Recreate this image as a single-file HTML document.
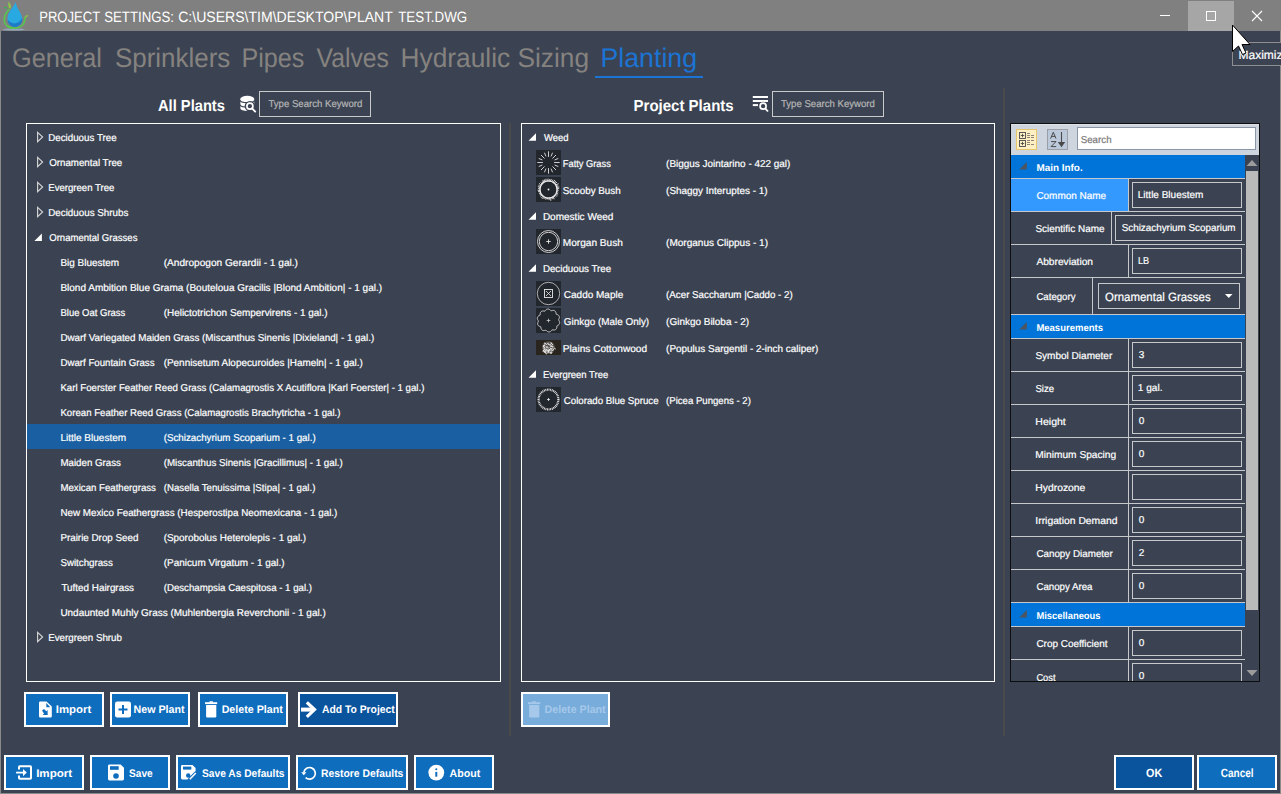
<!DOCTYPE html>
<html><head><meta charset="utf-8"><title>Project Settings</title>
<style>html,body{margin:0;padding:0;background:#3b4352;overflow:hidden}svg{display:block}</style></head>
<body><svg width="1281" height="794" viewBox="0 0 1281 794" style="font-family:'Liberation Sans',sans-serif"><rect x="0" y="0" width="1281" height="794" fill="#3b4352" /><rect x="0" y="0" width="1281" height="31" fill="#808080" /><rect x="0" y="31" width="1" height="763" fill="#8a8a8a" /><rect x="1280" y="31" width="1" height="763" fill="#8a8a8a" /><rect x="0" y="793" width="1281" height="1" fill="#8a8a8a" /><rect x="1188" y="1" width="46" height="30" fill="#a6a6a6" /><rect x="1160" y="15" width="10" height="1" fill="#ffffff" /><rect x="1206" y="11" width="10" height="1" fill="#ffffff" /><rect x="1206" y="20" width="10" height="1" fill="#ffffff" /><rect x="1206" y="11" width="1" height="10" fill="#ffffff" /><rect x="1215" y="11" width="1" height="10" fill="#ffffff" /><path d="M1252 11 L1262 21 M1262 11 L1252 21" stroke="#fff" stroke-width="1.1"/><text text-rendering="geometricPrecision" x="39.23" y="22" font-family="Liberation Sans" font-size="15" font-weight="400" fill="#ffffff" textLength="60.98" lengthAdjust="spacingAndGlyphs" >PROJECT</text><text text-rendering="geometricPrecision" x="104.22" y="22" font-family="Liberation Sans" font-size="15" font-weight="400" fill="#ffffff" textLength="69.83" lengthAdjust="spacingAndGlyphs" >SETTINGS:</text><text text-rendering="geometricPrecision" x="178.16" y="22" font-family="Liberation Sans" font-size="15" font-weight="400" fill="#ffffff" textLength="214.68" lengthAdjust="spacingAndGlyphs" >C:\USERS\TIM\DESKTOP\PLANT</text><text text-rendering="geometricPrecision" x="398.20" y="22" font-family="Liberation Sans" font-size="15" font-weight="400" fill="#ffffff" textLength="68.94" lengthAdjust="spacingAndGlyphs" >TEST.DWG</text><g>
<ellipse cx="13.8" cy="29.5" rx="11" ry="0.9" fill="#98adc6" opacity="0.85"/>
<path d="M9.3 9.3 C6.5 12 4.2 16 4.2 19.4 C4.2 22 5 24 6.5 25.5 C8.5 27.3 11 28.2 14.1 28.2 C17.5 28.2 20.5 27 22.6 25 C24.2 23.2 24.9 20.5 25 17" stroke="#58c450" stroke-width="1.7" fill="none"/>
<path d="M15.7 1.8 C14.8 4.5 12.5 7.5 10.5 10.2 C8.6 13 7.5 15.6 7.5 18.6 C7.5 23.2 10.8 26.9 15 26.9 C19 26.9 22.2 23.6 22.2 19.6 C22.2 16 20.6 12.8 18.4 9.4 C16.9 7 15.9 4.5 15.7 1.8 Z" fill="#29a9e1"/>
<path d="M7.6 19.2 C9 21.6 11.5 23.3 14.2 23.4 C17.5 23.5 20.5 21.2 22.1 18 C22.3 18.5 22.2 19.1 22.2 19.6 C22.2 23.6 19 26.9 15 26.9 C10.8 26.9 7.6 23.5 7.6 19.2 Z" fill="#1e79c6"/>
<path d="M9.2 8.6 C8.2 6.6 8.4 3.6 8.3 1.8 C10 3 11.2 5.2 10.9 8 Z" fill="#8cc941"/>
<path d="M8.2 8.4 C6.8 7.2 5 6.8 3.6 7.3 C4.8 8.4 6.6 8.9 8.2 8.4 Z" fill="#39b54a"/>
<path d="M24.4 17.8 C25 16.2 26.5 15 28.4 15.1 C27.8 16.7 26.3 17.8 24.4 17.8 Z" fill="#8cc941"/>
</g><text text-rendering="geometricPrecision" x="12.06" y="67" font-family="Liberation Sans" font-size="27" font-weight="400" fill="#85827f" textLength="89.93" lengthAdjust="spacingAndGlyphs" >General</text><text text-rendering="geometricPrecision" x="114.94" y="67" font-family="Liberation Sans" font-size="27" font-weight="400" fill="#85827f" textLength="115.37" lengthAdjust="spacingAndGlyphs" >Sprinklers</text><text text-rendering="geometricPrecision" x="241.44" y="67" font-family="Liberation Sans" font-size="27" font-weight="400" fill="#85827f" textLength="62.77" lengthAdjust="spacingAndGlyphs" >Pipes</text><text text-rendering="geometricPrecision" x="316.60" y="67" font-family="Liberation Sans" font-size="27" font-weight="400" fill="#85827f" textLength="72.36" lengthAdjust="spacingAndGlyphs" >Valves</text><text text-rendering="geometricPrecision" x="400.55" y="67" font-family="Liberation Sans" font-size="27" font-weight="400" fill="#85827f" textLength="188.48" lengthAdjust="spacingAndGlyphs" >Hydraulic Sizing</text><text text-rendering="geometricPrecision" x="600.42" y="67" font-family="Liberation Sans" font-size="27" font-weight="400" fill="#1b74d4" textLength="96.75" lengthAdjust="spacingAndGlyphs" >Planting</text><rect x="595" y="76" width="108" height="2" fill="#1b74d4" /><text text-rendering="geometricPrecision" x="158.00" y="111" font-family="Liberation Sans" font-size="16" font-weight="700" fill="#ffffff" textLength="66.91" lengthAdjust="spacingAndGlyphs" >All Plants</text><text text-rendering="geometricPrecision" x="633.56" y="111" font-family="Liberation Sans" font-size="16" font-weight="700" fill="#ffffff" textLength="100.10" lengthAdjust="spacingAndGlyphs" >Project Plants</text><rect x="259" y="91" width="112" height="1" fill="#c9c9c9" /><rect x="259" y="116" width="112" height="1" fill="#c9c9c9" /><rect x="259" y="91" width="1" height="26" fill="#c9c9c9" /><rect x="370" y="91" width="1" height="26" fill="#c9c9c9" /><text text-rendering="geometricPrecision" x="268.50" y="106.8" font-family="Liberation Sans" font-size="10" font-weight="400" fill="#b5b5b5" stroke="#b5b5b5" stroke-width="0.2" textLength="93.79" lengthAdjust="spacingAndGlyphs" >Type Search Keyword</text><rect x="772" y="91" width="112" height="1" fill="#c9c9c9" /><rect x="772" y="116" width="112" height="1" fill="#c9c9c9" /><rect x="772" y="91" width="1" height="26" fill="#c9c9c9" /><rect x="883" y="91" width="1" height="26" fill="#c9c9c9" /><text text-rendering="geometricPrecision" x="781.00" y="106.8" font-family="Liberation Sans" font-size="10" font-weight="400" fill="#b5b5b5" stroke="#b5b5b5" stroke-width="0.2" textLength="93.79" lengthAdjust="spacingAndGlyphs" >Type Search Keyword</text><g>
<path d="M240.4 98.7 V108.6 A6.9 2.4 0 0 0 254.2 108.6 V98.7 Z" fill="#fff"/>
<ellipse cx="247.3" cy="98.7" rx="6.9" ry="2.9" fill="#fff"/>
<path d="M240.2 100.3 A7.1 2.3 0 0 0 254.4 100.3 M240.2 104.7 A7.1 2.3 0 0 0 254.4 104.7" stroke="#3b4352" stroke-width="1.1" fill="none"/>
<circle cx="249.9" cy="106.2" r="5.3" fill="#3b4352"/>
<path d="M252.5 109 L256.2 112.6" stroke="#3b4352" stroke-width="3.4"/>
<circle cx="249.9" cy="106.2" r="3" fill="none" stroke="#fff" stroke-width="1.7"/>
<path d="M252 108.4 L255.2 111.6" stroke="#fff" stroke-width="1.9" stroke-linecap="round"/>
</g><g fill="#fff">
<rect x="752.8" y="96" width="15.2" height="2"/>
<rect x="752.8" y="100" width="15.2" height="2"/>
<rect x="752.8" y="104.1" width="5.2" height="2"/>
<circle cx="763.1" cy="106.2" r="4.4" fill="#3b4352"/><circle cx="763.1" cy="106.2" r="3" fill="none" stroke="#fff" stroke-width="1.7"/>
<path d="M765.2 108.4 L768 111.5" stroke="#fff" stroke-width="1.8"/>
</g><rect x="509" y="123" width="2" height="613" fill="#4a4a4a" /><rect x="1003" y="88" width="2" height="648" fill="#4a4a4a" /><rect x="26" y="123" width="475" height="1" fill="#ffffff" /><rect x="26" y="681" width="475" height="1" fill="#ffffff" /><rect x="26" y="123" width="1" height="559" fill="#ffffff" /><rect x="500" y="123" width="1" height="559" fill="#ffffff" /><rect x="27" y="424" width="473" height="25" fill="#1a5fa1" /><path d="M37.6 132.4 L42.6 137.0 L37.6 141.60000000000002 Z" fill="none" stroke="#d4d4d4" stroke-width="1.15"/><text text-rendering="geometricPrecision" x="48.22" y="141" font-family="Liberation Sans" font-size="10" font-weight="400" fill="#fff" stroke="#fff" stroke-width="0.2" textLength="68.42" lengthAdjust="spacingAndGlyphs" >Deciduous Tree</text><path d="M37.6 157.4 L42.6 162.0 L37.6 166.60000000000002 Z" fill="none" stroke="#d4d4d4" stroke-width="1.15"/><text text-rendering="geometricPrecision" x="49.20" y="166" font-family="Liberation Sans" font-size="10" font-weight="400" fill="#fff" stroke="#fff" stroke-width="0.2" textLength="73.05" lengthAdjust="spacingAndGlyphs" >Ornamental Tree</text><path d="M37.6 182.4 L42.6 187.0 L37.6 191.60000000000002 Z" fill="none" stroke="#d4d4d4" stroke-width="1.15"/><text text-rendering="geometricPrecision" x="48.24" y="191" font-family="Liberation Sans" font-size="10" font-weight="400" fill="#fff" stroke="#fff" stroke-width="0.2" textLength="66.20" lengthAdjust="spacingAndGlyphs" >Evergreen Tree</text><path d="M37.6 207.4 L42.6 212.0 L37.6 216.60000000000002 Z" fill="none" stroke="#d4d4d4" stroke-width="1.15"/><text text-rendering="geometricPrecision" x="48.22" y="216" font-family="Liberation Sans" font-size="10" font-weight="400" fill="#fff" stroke="#fff" stroke-width="0.2" textLength="80.10" lengthAdjust="spacingAndGlyphs" >Deciduous Shrubs</text><path d="M34.4 241.0 L41.9 241.0 L41.9 233.5 Z" fill="#ffffff"/><text text-rendering="geometricPrecision" x="49.20" y="241" font-family="Liberation Sans" font-size="10" font-weight="400" fill="#fff" stroke="#fff" stroke-width="0.2" textLength="88.25" lengthAdjust="spacingAndGlyphs" >Ornamental Grasses</text><text text-rendering="geometricPrecision" x="60.41" y="266" font-family="Liberation Sans" font-size="10" font-weight="400" fill="#fff" stroke="#fff" stroke-width="0.2" textLength="58.61" lengthAdjust="spacingAndGlyphs" >Big Bluestem</text><text text-rendering="geometricPrecision" x="163.70" y="266" font-family="Liberation Sans" font-size="10" font-weight="400" fill="#fff" stroke="#fff" stroke-width="0.2" textLength="134.27" lengthAdjust="spacingAndGlyphs" >(Andropogon Gerardii - 1 gal.)</text><text text-rendering="geometricPrecision" x="60.40" y="291" font-family="Liberation Sans" font-size="10" font-weight="400" fill="#fff" stroke="#fff" stroke-width="0.2" textLength="321.67" lengthAdjust="spacingAndGlyphs" >Blond Ambition Blue Grama (Bouteloua Gracilis |Blond Ambition| - 1 gal.)</text><text text-rendering="geometricPrecision" x="60.45" y="316" font-family="Liberation Sans" font-size="10" font-weight="400" fill="#fff" stroke="#fff" stroke-width="0.2" textLength="64.89" lengthAdjust="spacingAndGlyphs" >Blue Oat Grass</text><text text-rendering="geometricPrecision" x="163.70" y="316" font-family="Liberation Sans" font-size="10" font-weight="400" fill="#fff" stroke="#fff" stroke-width="0.2" textLength="163.86" lengthAdjust="spacingAndGlyphs" >(Helictotrichon Sempervirens - 1 gal.)</text><text text-rendering="geometricPrecision" x="60.42" y="341" font-family="Liberation Sans" font-size="10" font-weight="400" fill="#fff" stroke="#fff" stroke-width="0.2" textLength="313.76" lengthAdjust="spacingAndGlyphs" >Dwarf Variegated Maiden Grass (Miscanthus Sinenis |Dixieland| - 1 gal.)</text><text text-rendering="geometricPrecision" x="60.43" y="366" font-family="Liberation Sans" font-size="10" font-weight="400" fill="#fff" stroke="#fff" stroke-width="0.2" textLength="94.12" lengthAdjust="spacingAndGlyphs" >Dwarf Fountain Grass</text><text text-rendering="geometricPrecision" x="163.70" y="366" font-family="Liberation Sans" font-size="10" font-weight="400" fill="#fff" stroke="#fff" stroke-width="0.2" textLength="199.15" lengthAdjust="spacingAndGlyphs" >(Pennisetum Alopecuroides |Hameln| - 1 gal.)</text><text text-rendering="geometricPrecision" x="60.43" y="391" font-family="Liberation Sans" font-size="10" font-weight="400" fill="#fff" stroke="#fff" stroke-width="0.2" textLength="363.97" lengthAdjust="spacingAndGlyphs" >Karl Foerster Feather Reed Grass (Calamagrostis X Acutiflora |Karl Foerster| - 1 gal.)</text><text text-rendering="geometricPrecision" x="60.44" y="416" font-family="Liberation Sans" font-size="10" font-weight="400" fill="#fff" stroke="#fff" stroke-width="0.2" textLength="280.03" lengthAdjust="spacingAndGlyphs" >Korean Feather Reed Grass (Calamagrostis Brachytricha - 1 gal.)</text><text text-rendering="geometricPrecision" x="60.40" y="441" font-family="Liberation Sans" font-size="10" font-weight="400" fill="#fff" stroke="#fff" stroke-width="0.2" textLength="65.80" lengthAdjust="spacingAndGlyphs" >Little Bluestem</text><text text-rendering="geometricPrecision" x="163.70" y="441" font-family="Liberation Sans" font-size="10" font-weight="400" fill="#fff" stroke="#fff" stroke-width="0.2" textLength="152.00" lengthAdjust="spacingAndGlyphs" >(Schizachyrium Scoparium - 1 gal.)</text><text text-rendering="geometricPrecision" x="60.43" y="466" font-family="Liberation Sans" font-size="10" font-weight="400" fill="#fff" stroke="#fff" stroke-width="0.2" textLength="60.52" lengthAdjust="spacingAndGlyphs" >Maiden Grass</text><text text-rendering="geometricPrecision" x="163.70" y="466" font-family="Liberation Sans" font-size="10" font-weight="400" fill="#fff" stroke="#fff" stroke-width="0.2" textLength="179.08" lengthAdjust="spacingAndGlyphs" >(Miscanthus Sinenis |Gracillimus| - 1 gal.)</text><text text-rendering="geometricPrecision" x="60.43" y="491" font-family="Liberation Sans" font-size="10" font-weight="400" fill="#fff" stroke="#fff" stroke-width="0.2" textLength="95.50" lengthAdjust="spacingAndGlyphs" >Mexican Feathergrass</text><text text-rendering="geometricPrecision" x="163.70" y="491" font-family="Liberation Sans" font-size="10" font-weight="400" fill="#fff" stroke="#fff" stroke-width="0.2" textLength="151.73" lengthAdjust="spacingAndGlyphs" >(Nasella Tenuissima |Stipa| - 1 gal.)</text><text text-rendering="geometricPrecision" x="60.42" y="516" font-family="Liberation Sans" font-size="10" font-weight="400" fill="#fff" stroke="#fff" stroke-width="0.2" textLength="276.97" lengthAdjust="spacingAndGlyphs" >New Mexico Feathergrass (Hesperostipa Neomexicana - 1 gal.)</text><text text-rendering="geometricPrecision" x="60.42" y="541" font-family="Liberation Sans" font-size="10" font-weight="400" fill="#fff" stroke="#fff" stroke-width="0.2" textLength="78.06" lengthAdjust="spacingAndGlyphs" >Prairie Drop Seed</text><text text-rendering="geometricPrecision" x="163.70" y="541" font-family="Liberation Sans" font-size="10" font-weight="400" fill="#fff" stroke="#fff" stroke-width="0.2" textLength="142.47" lengthAdjust="spacingAndGlyphs" >(Sporobolus Heterolepis - 1 gal.)</text><text text-rendering="geometricPrecision" x="60.43" y="566" font-family="Liberation Sans" font-size="10" font-weight="400" fill="#fff" stroke="#fff" stroke-width="0.2" textLength="52.38" lengthAdjust="spacingAndGlyphs" >Switchgrass</text><text text-rendering="geometricPrecision" x="163.70" y="566" font-family="Liberation Sans" font-size="10" font-weight="400" fill="#fff" stroke="#fff" stroke-width="0.2" textLength="120.83" lengthAdjust="spacingAndGlyphs" >(Panicum Virgatum - 1 gal.)</text><text text-rendering="geometricPrecision" x="61.40" y="591" font-family="Liberation Sans" font-size="10" font-weight="400" fill="#fff" stroke="#fff" stroke-width="0.2" textLength="72.64" lengthAdjust="spacingAndGlyphs" >Tufted Hairgrass</text><text text-rendering="geometricPrecision" x="163.70" y="591" font-family="Liberation Sans" font-size="10" font-weight="400" fill="#fff" stroke="#fff" stroke-width="0.2" textLength="148.29" lengthAdjust="spacingAndGlyphs" >(Deschampsia Caespitosa - 1 gal.)</text><text text-rendering="geometricPrecision" x="60.41" y="616" font-family="Liberation Sans" font-size="10" font-weight="400" fill="#fff" stroke="#fff" stroke-width="0.2" textLength="265.29" lengthAdjust="spacingAndGlyphs" >Undaunted Muhly Grass (Muhlenbergia Reverchonii - 1 gal.)</text><path d="M37.6 632.4 L42.6 637.0 L37.6 641.5999999999999 Z" fill="none" stroke="#d4d4d4" stroke-width="1.15"/><text text-rendering="geometricPrecision" x="48.23" y="641" font-family="Liberation Sans" font-size="10" font-weight="400" fill="#fff" stroke="#fff" stroke-width="0.2" textLength="73.67" lengthAdjust="spacingAndGlyphs" >Evergreen Shrub</text><rect x="521" y="123" width="474" height="1" fill="#ffffff" /><rect x="521" y="681" width="474" height="1" fill="#ffffff" /><rect x="521" y="123" width="1" height="559" fill="#ffffff" /><rect x="994" y="123" width="1" height="559" fill="#ffffff" /><path d="M528.5 140.7 L536.0 140.7 L536.0 133.2 Z" fill="#ffffff"/><text text-rendering="geometricPrecision" x="543.90" y="141" font-family="Liberation Sans" font-size="10" font-weight="400" fill="#fff" stroke="#fff" stroke-width="0.2" textLength="24.56" lengthAdjust="spacingAndGlyphs" >Weed</text><rect x="536" y="150" width="25" height="25" fill="#22262d" /><path d="M554.10 162.50 L559.70 162.50 M554.60 165.03 L558.29 166.56 M552.46 166.46 L556.00 170.00 M551.03 168.60 L552.56 172.29 M548.50 168.10 L548.50 173.70 M545.97 168.60 L544.44 172.29 M544.54 166.46 L541.00 170.00 M542.40 165.03 L538.71 166.56 M542.90 162.50 L537.30 162.50 M542.40 159.97 L538.71 158.44 M544.54 158.54 L541.00 155.00 M545.97 156.40 L544.44 152.71 M548.50 156.90 L548.50 151.30 M551.03 156.40 L552.56 152.71 M552.46 158.54 L556.00 155.00 M554.60 159.97 L558.29 158.44" stroke="#d6d6d6" stroke-width="0.95"/><text text-rendering="geometricPrecision" x="562.87" y="167" font-family="Liberation Sans" font-size="10" font-weight="400" fill="#fff" stroke="#fff" stroke-width="0.2" textLength="47.94" lengthAdjust="spacingAndGlyphs" >Fatty Grass</text><text text-rendering="geometricPrecision" x="666.10" y="167" font-family="Liberation Sans" font-size="10" font-weight="400" fill="#fff" stroke="#fff" stroke-width="0.2" textLength="124.28" lengthAdjust="spacingAndGlyphs" >(Biggus Jointarino - 422 gal)</text><rect x="536" y="177" width="25" height="25" fill="#22262d" /><circle cx="548.5" cy="189.5" r="8.6" stroke="#f0f0f0" stroke-width="1.2" fill="none"/><path d="M556.50 189.63 L558.69 190.48 M556.36 191.01 L558.25 192.19 M556.04 192.18 L558.16 193.83 M555.62 193.15 L557.69 195.19 M554.96 194.21 L556.61 196.47 M554.14 195.18 L555.05 197.25 M553.06 196.07 L554.20 199.29 M552.09 196.65 L552.39 199.10 M550.73 197.18 L550.82 200.78 M549.52 197.43 L549.01 200.12 M548.11 197.49 L547.21 199.49 M546.91 197.34 L545.61 199.56 M545.97 197.09 L544.52 198.88 M544.76 196.57 L542.43 199.04 M543.74 195.93 L541.31 197.74 M542.67 194.97 L540.22 196.11 M541.90 194.02 L539.74 194.53 M541.36 193.11 L538.94 193.41 M540.81 191.71 L538.03 191.62 M540.58 190.63 L537.58 190.17 M540.50 189.32 L538.08 188.43 M540.65 187.94 L537.80 186.46 M540.92 186.94 L538.47 185.18 M541.47 185.68 L538.95 183.28 M542.20 184.56 L540.81 182.41 M543.13 183.57 L542.28 181.43 M543.93 182.93 L542.86 179.81 M544.92 182.34 L544.46 179.50 M546.04 181.89 L545.95 178.73 M547.55 181.56 L548.08 178.59 M548.85 181.51 L549.80 179.08 M550.03 181.65 L551.44 178.95 M551.19 181.97 L552.91 179.72 M552.43 182.53 L554.94 179.96 M553.35 183.14 L555.89 181.27 M554.17 183.86 L556.99 182.31 M555.12 185.01 L558.58 183.78 M555.77 186.16 L558.32 185.91 M556.15 187.18 L559.32 187.14 M556.40 188.26 L559.21 188.69" stroke="#eaeaea" stroke-width="0.9"/><circle cx="548.5" cy="189.5" r="0.9" fill="#fff"/><text text-rendering="geometricPrecision" x="562.82" y="194" font-family="Liberation Sans" font-size="10" font-weight="400" fill="#fff" stroke="#fff" stroke-width="0.2" textLength="57.90" lengthAdjust="spacingAndGlyphs" >Scooby Bush</text><text text-rendering="geometricPrecision" x="666.10" y="194" font-family="Liberation Sans" font-size="10" font-weight="400" fill="#fff" stroke="#fff" stroke-width="0.2" textLength="101.48" lengthAdjust="spacingAndGlyphs" >(Shaggy Interuptes - 1)</text><path d="M528.5 219.7 L536.0 219.7 L536.0 212.2 Z" fill="#ffffff"/><text text-rendering="geometricPrecision" x="542.90" y="220" font-family="Liberation Sans" font-size="10" font-weight="400" fill="#fff" stroke="#fff" stroke-width="0.2" textLength="70.51" lengthAdjust="spacingAndGlyphs" >Domestic Weed</text><rect x="536" y="229" width="25" height="25" fill="#22262d" /><circle cx="548.5" cy="241.5" r="11" stroke="#e0e0e0" stroke-width="0.9" fill="none"/><circle cx="548.5" cy="241.5" r="9.2" stroke="#e0e0e0" stroke-width="0.9" fill="none"/><path d="M546.3 241.5 L550.7 241.5 M548.5 239.3 L548.5 243.7" stroke="#e8e8e8" stroke-width="0.9"/><text text-rendering="geometricPrecision" x="562.79" y="246" font-family="Liberation Sans" font-size="10" font-weight="400" fill="#fff" stroke="#fff" stroke-width="0.2" textLength="60.10" lengthAdjust="spacingAndGlyphs" >Morgan Bush</text><text text-rendering="geometricPrecision" x="666.10" y="246" font-family="Liberation Sans" font-size="10" font-weight="400" fill="#fff" stroke="#fff" stroke-width="0.2" textLength="101.92" lengthAdjust="spacingAndGlyphs" >(Morganus Clippus - 1)</text><path d="M528.5 271.7 L536.0 271.7 L536.0 264.2 Z" fill="#ffffff"/><text text-rendering="geometricPrecision" x="542.93" y="272" font-family="Liberation Sans" font-size="10" font-weight="400" fill="#fff" stroke="#fff" stroke-width="0.2" textLength="68.22" lengthAdjust="spacingAndGlyphs" >Deciduous Tree</text><rect x="536" y="281" width="25" height="25" fill="#22262d" /><circle cx="548.5" cy="293.5" r="11.2" stroke="#d0d0d0" stroke-width="0.8" fill="none"/><rect x="544.5" y="289.5" width="8" height="8" stroke="#e8e8e8" stroke-width="0.9" fill="none"/><path d="M546.0 291.0 L551.0 296.0 M551.0 291.0 L546.0 296.0" stroke="#e8e8e8" stroke-width="0.8"/><text text-rendering="geometricPrecision" x="563.80" y="298" font-family="Liberation Sans" font-size="10" font-weight="400" fill="#fff" stroke="#fff" stroke-width="0.2" textLength="59.48" lengthAdjust="spacingAndGlyphs" >Caddo Maple</text><text text-rendering="geometricPrecision" x="666.10" y="298" font-family="Liberation Sans" font-size="10" font-weight="400" fill="#fff" stroke="#fff" stroke-width="0.2" textLength="126.65" lengthAdjust="spacingAndGlyphs" >(Acer Saccharum |Caddo - 2)</text><rect x="536" y="308" width="25" height="25" fill="#22262d" /><path d="M558.87 320.50 L559.24 321.06 L559.51 321.66 L559.68 322.27 L559.71 322.88 L559.61 323.48 L559.37 324.03 L559.01 324.53 L558.54 324.97 L557.99 325.33 L557.38 325.63 L556.85 325.93 L556.89 326.60 L556.86 327.27 L556.73 327.91 L556.50 328.50 L556.17 329.02 L555.74 329.44 L555.22 329.75 L554.63 329.94 L553.99 330.02 L553.33 329.99 L552.67 329.87 L552.07 329.80 L551.71 330.37 L551.28 330.89 L550.80 331.33 L550.27 331.68 L549.70 331.90 L549.10 331.98 L548.50 331.93 L547.91 331.74 L547.35 331.43 L546.83 331.02 L546.37 330.53 L545.92 330.12 L545.29 330.37 L544.65 330.54 L544.00 330.62 L543.36 330.58 L542.77 330.42 L542.24 330.14 L541.78 329.75 L541.42 329.25 L541.15 328.67 L540.97 328.03 L540.88 327.36 L540.76 326.77 L540.11 326.60 L539.48 326.36 L538.91 326.04 L538.42 325.64 L538.03 325.16 L537.76 324.62 L537.63 324.03 L537.63 323.41 L537.75 322.78 L537.98 322.17 L538.30 321.57 L538.55 321.02 L538.13 320.50 L537.76 319.94 L537.49 319.34 L537.32 318.73 L537.29 318.12 L537.39 317.52 L537.63 316.97 L537.99 316.47 L538.46 316.03 L539.01 315.67 L539.62 315.37 L540.15 315.07 L540.11 314.40 L540.14 313.73 L540.27 313.09 L540.50 312.50 L540.83 311.98 L541.26 311.56 L541.78 311.25 L542.37 311.06 L543.01 310.98 L543.67 311.01 L544.33 311.13 L544.93 311.20 L545.29 310.63 L545.72 310.11 L546.20 309.67 L546.73 309.32 L547.30 309.10 L547.90 309.02 L548.50 309.07 L549.09 309.26 L549.65 309.57 L550.17 309.98 L550.63 310.47 L551.08 310.88 L551.71 310.63 L552.35 310.46 L553.00 310.38 L553.64 310.42 L554.23 310.58 L554.76 310.86 L555.22 311.25 L555.58 311.75 L555.85 312.33 L556.03 312.97 L556.12 313.64 L556.24 314.23 L556.89 314.40 L557.52 314.64 L558.09 314.96 L558.58 315.36 L558.97 315.84 L559.24 316.38 L559.37 316.97 L559.37 317.59 L559.25 318.22 L559.02 318.83 L558.70 319.43 L558.45 319.98 L558.87 320.50" stroke="#d8d8d8" stroke-width="0.9" fill="none"/><path d="M546.7 320.5 L550.3 320.5 M548.5 318.7 L548.5 322.3" stroke="#cfcfcf" stroke-width="0.8"/><text text-rendering="geometricPrecision" x="563.80" y="325" font-family="Liberation Sans" font-size="10" font-weight="400" fill="#fff" stroke="#fff" stroke-width="0.2" textLength="85.34" lengthAdjust="spacingAndGlyphs" >Ginkgo (Male Only)</text><text text-rendering="geometricPrecision" x="666.10" y="325" font-family="Liberation Sans" font-size="10" font-weight="400" fill="#fff" stroke="#fff" stroke-width="0.2" textLength="83.07" lengthAdjust="spacingAndGlyphs" >(Ginkgo Biloba - 2)</text><rect x="536" y="340" width="25" height="15" fill="#2a241f" /><g><circle cx="548.5" cy="347.6" r="6.4" fill="#7d7a76" opacity="0.55"/><path d="M547.41 349.79 l1.47 0.34" stroke="#f2f2f2" stroke-width="0.9"/><path d="M544.79 346.75 l-0.02 0.68" stroke="#f2f2f2" stroke-width="0.9"/><path d="M552.53 348.57 l0.67 0.20" stroke="#f2f2f2" stroke-width="0.9"/><path d="M543.40 350.22 l0.59 0.50" stroke="#f2f2f2" stroke-width="0.9"/><path d="M544.23 343.20 l0.45 1.33" stroke="#f2f2f2" stroke-width="0.9"/><path d="M549.84 347.40 l1.11 1.42" stroke="#f2f2f2" stroke-width="0.9"/><path d="M549.83 349.30 l-0.86 0.56" stroke="#f2f2f2" stroke-width="0.9"/><path d="M550.53 351.96 l0.58 1.38" stroke="#f2f2f2" stroke-width="0.9"/><path d="M546.99 347.13 l0.55 0.41" stroke="#f2f2f2" stroke-width="0.9"/><path d="M546.76 343.87 l-0.28 1.00" stroke="#f2f2f2" stroke-width="0.9"/><path d="M545.20 348.60 l-1.00 1.39" stroke="#f2f2f2" stroke-width="0.9"/><path d="M548.68 352.37 l-1.23 0.51" stroke="#f2f2f2" stroke-width="0.9"/><path d="M548.06 344.25 l1.84 0.71" stroke="#f2f2f2" stroke-width="0.9"/><path d="M543.73 350.30 l0.03 0.81" stroke="#f2f2f2" stroke-width="0.9"/><path d="M553.49 348.86 l-0.38 1.63" stroke="#f2f2f2" stroke-width="0.9"/><path d="M551.00 345.11 l-0.46 1.50" stroke="#f2f2f2" stroke-width="0.9"/><path d="M544.77 345.55 l-1.75 0.31" stroke="#f2f2f2" stroke-width="0.9"/><path d="M543.43 348.43 l-0.41 0.55" stroke="#f2f2f2" stroke-width="0.9"/><path d="M544.72 342.59 l1.10 1.36" stroke="#f2f2f2" stroke-width="0.9"/><path d="M544.62 350.99 l0.08 0.63" stroke="#f2f2f2" stroke-width="0.9"/><path d="M549.56 349.48 l-0.51 0.45" stroke="#f2f2f2" stroke-width="0.9"/><path d="M550.66 349.88 l-1.05 0.45" stroke="#f2f2f2" stroke-width="0.9"/><path d="M552.19 349.65 l-1.28 0.49" stroke="#f2f2f2" stroke-width="0.9"/><path d="M550.97 342.29 l0.26 0.95" stroke="#f2f2f2" stroke-width="0.9"/><path d="M544.76 352.19 l1.73 0.89" stroke="#f2f2f2" stroke-width="0.9"/><path d="M549.86 350.31 l0.04 0.93" stroke="#f2f2f2" stroke-width="0.9"/><path d="M545.76 345.88 l0.15 0.59" stroke="#f2f2f2" stroke-width="0.9"/><path d="M545.27 351.07 l-1.09 1.60" stroke="#f2f2f2" stroke-width="0.9"/><path d="M543.57 347.12 l1.52 0.26" stroke="#f2f2f2" stroke-width="0.9"/><path d="M552.99 344.32 l-1.47 1.08" stroke="#f2f2f2" stroke-width="0.9"/><path d="M545.40 350.09 l-0.31 0.68" stroke="#f2f2f2" stroke-width="0.9"/><path d="M550.01 348.22 l0.78 0.44" stroke="#f2f2f2" stroke-width="0.9"/><path d="M547.73 348.82 l0.53 0.27" stroke="#f2f2f2" stroke-width="0.9"/><path d="M551.55 349.86 l-0.59 0.24" stroke="#f2f2f2" stroke-width="0.9"/><path d="M546.67 346.00 l0.44 0.85" stroke="#f2f2f2" stroke-width="0.9"/><path d="M547.05 349.26 l-1.79 0.04" stroke="#f2f2f2" stroke-width="0.9"/><path d="M544.22 348.53 l0.68 0.23" stroke="#f2f2f2" stroke-width="0.9"/><path d="M546.72 350.31 l1.54 0.86" stroke="#f2f2f2" stroke-width="0.9"/><path d="M554.58 348.49 l1.20 0.60" stroke="#f2f2f2" stroke-width="0.9"/><path d="M547.50 347.32 l-1.34 0.09" stroke="#f2f2f2" stroke-width="0.9"/><path d="M551.93 343.62 l0.39 0.88" stroke="#f2f2f2" stroke-width="0.9"/><path d="M551.26 352.40 l-1.03 0.86" stroke="#f2f2f2" stroke-width="0.9"/><path d="M547.07 350.21 l-1.73 0.08" stroke="#f2f2f2" stroke-width="0.9"/><path d="M551.90 343.08 l-1.19 1.27" stroke="#f2f2f2" stroke-width="0.9"/><path d="M549.16 352.08 l1.09 0.10" stroke="#f2f2f2" stroke-width="0.9"/><path d="M551.78 348.18 l-0.55 0.79" stroke="#f2f2f2" stroke-width="0.9"/><path d="M552.56 346.46 l-1.91 0.07" stroke="#f2f2f2" stroke-width="0.9"/><path d="M552.15 346.54 l0.69 0.59" stroke="#f2f2f2" stroke-width="0.9"/><path d="M549.44 350.29 l-1.40 0.45" stroke="#f2f2f2" stroke-width="0.9"/><path d="M550.85 343.92 l-1.22 0.89" stroke="#f2f2f2" stroke-width="0.9"/><path d="M552.91 350.20 l-1.45 1.18" stroke="#f2f2f2" stroke-width="0.9"/><path d="M548.50 343.24 l-0.67 0.52" stroke="#f2f2f2" stroke-width="0.9"/><path d="M545.71 352.50 l0.63 1.86" stroke="#f2f2f2" stroke-width="0.9"/><path d="M543.51 351.16 l1.39 0.82" stroke="#f2f2f2" stroke-width="0.9"/><path d="M550.21 349.35 l-1.53 1.07" stroke="#f2f2f2" stroke-width="0.9"/><path d="M551.98 352.15 l-0.94 1.74" stroke="#f2f2f2" stroke-width="0.9"/><path d="M545.75 351.37 l0.78 0.04" stroke="#f2f2f2" stroke-width="0.9"/><path d="M553.49 346.68 l-1.31 0.28" stroke="#f2f2f2" stroke-width="0.9"/><path d="M543.12 349.98 l1.38 1.08" stroke="#f2f2f2" stroke-width="0.9"/><path d="M548.46 351.01 l-0.25 0.90" stroke="#f2f2f2" stroke-width="0.9"/><path d="M548.26 351.67 l-0.75 0.22" stroke="#f2f2f2" stroke-width="0.9"/><path d="M545.91 350.99 l-1.35 0.42" stroke="#f2f2f2" stroke-width="0.9"/><path d="M543.20 350.49 l-0.13 1.30" stroke="#f2f2f2" stroke-width="0.9"/><path d="M547.65 347.47 l1.02 0.66" stroke="#f2f2f2" stroke-width="0.9"/><path d="M554.13 347.74 l0.07 0.84" stroke="#f2f2f2" stroke-width="0.9"/><path d="M547.77 342.96 l-0.06 1.05" stroke="#f2f2f2" stroke-width="0.9"/><path d="M543.26 345.70 l-0.14 0.74" stroke="#f2f2f2" stroke-width="0.9"/><path d="M548.53 350.92 l-0.04 1.68" stroke="#f2f2f2" stroke-width="0.9"/><path d="M543.42 345.52 l0.33 1.85" stroke="#f2f2f2" stroke-width="0.9"/><path d="M545.09 344.69 l-0.75 1.08" stroke="#f2f2f2" stroke-width="0.9"/></g><text text-rendering="geometricPrecision" x="562.79" y="352" font-family="Liberation Sans" font-size="10" font-weight="400" fill="#fff" stroke="#fff" stroke-width="0.2" textLength="84.31" lengthAdjust="spacingAndGlyphs" >Plains Cottonwood</text><text text-rendering="geometricPrecision" x="666.10" y="352" font-family="Liberation Sans" font-size="10" font-weight="400" fill="#fff" stroke="#fff" stroke-width="0.2" textLength="152.20" lengthAdjust="spacingAndGlyphs" >(Populus Sargentil - 2-inch caliper)</text><path d="M528.5 377.7 L536.0 377.7 L536.0 370.2 Z" fill="#ffffff"/><text text-rendering="geometricPrecision" x="542.95" y="378" font-family="Liberation Sans" font-size="10" font-weight="400" fill="#fff" stroke="#fff" stroke-width="0.2" textLength="65.29" lengthAdjust="spacingAndGlyphs" >Evergreen Tree</text><rect x="536" y="387" width="25" height="25" fill="#22262d" /><circle cx="548.5" cy="399.5" r="9.9" stroke="#e8e8e8" stroke-width="2.2" stroke-dasharray="0.9 0.7" fill="none"/><path d="M547.0 399.5 L550.0 399.5 M548.5 398.0 L548.5 401.0" stroke="#fff" stroke-width="0.7"/><text text-rendering="geometricPrecision" x="563.80" y="404" font-family="Liberation Sans" font-size="10" font-weight="400" fill="#fff" stroke="#fff" stroke-width="0.2" textLength="94.75" lengthAdjust="spacingAndGlyphs" >Colorado Blue Spruce</text><text text-rendering="geometricPrecision" x="666.10" y="404" font-family="Liberation Sans" font-size="10" font-weight="400" fill="#fff" stroke="#fff" stroke-width="0.2" textLength="84.77" lengthAdjust="spacingAndGlyphs" >(Picea Pungens - 2)</text><rect x="1010" y="123" width="250" height="559" fill="#3b4352" /><rect x="1010" y="123" width="250" height="1" fill="#0d0d0d" /><rect x="1010" y="681" width="250" height="1" fill="#0d0d0d" /><rect x="1010" y="123" width="1" height="559" fill="#0d0d0d" /><rect x="1259" y="123" width="1" height="559" fill="#0d0d0d" /><rect x="1011" y="124" width="248" height="31" fill="#cfd5df" /><rect x="1011" y="124" width="248" height="1" fill="#dde1e8" /><rect x="1016" y="129" width="21" height="21" fill="#fff0c4" /><rect x="1016" y="129" width="21" height="1" fill="#e6c56f" /><rect x="1016" y="149" width="21" height="1" fill="#e6c56f" /><rect x="1016" y="129" width="1" height="21" fill="#e6c56f" /><rect x="1036" y="129" width="1" height="21" fill="#e6c56f" /><g stroke="#4a4a4a" fill="none" stroke-width="0.9">
<rect x="1019.5" y="132.5" width="6" height="6"/><rect x="1019.5" y="140.5" width="6" height="6"/>
<path d="M1020.8 135.5 h3.4 M1022.5 133.8 v3.4 M1020.8 143.5 h3.4 M1022.5 141.8 v3.4"/>
</g>
<g fill="#8c8577">
<rect x="1027" y="133" width="3" height="1"/><rect x="1027" y="135" width="3" height="1"/><rect x="1031" y="135" width="3" height="1"/>
<rect x="1027" y="137" width="3" height="1"/><rect x="1031" y="137" width="3" height="1"/>
<rect x="1027" y="140" width="3" height="1"/><rect x="1031" y="140" width="3" height="1"/>
<rect x="1027" y="142" width="3" height="1"/><rect x="1027" y="144" width="3" height="1"/><rect x="1031" y="144" width="3" height="1"/>
</g><rect x="1047" y="129" width="21" height="21" fill="#bcc9da" /><rect x="1047" y="129" width="21" height="1" fill="#9b9fa5" /><rect x="1047" y="149" width="21" height="1" fill="#9b9fa5" /><rect x="1047" y="129" width="1" height="21" fill="#9b9fa5" /><rect x="1067" y="129" width="1" height="21" fill="#9b9fa5" /><path d="M1050.6 138.6 L1053.3 132.2 L1056 138.6 M1051.6 136.4 H1055" stroke="#4a4a4a" stroke-width="1" fill="none"/><path d="M1051 141.6 H1056 L1051 146.6 H1056.2" stroke="#4a4a4a" stroke-width="1" fill="none"/><path d="M1061.5 132 V143" stroke="#4a4a4a" stroke-width="1.1"/><path d="M1057.8 142 L1065.2 142 L1061.5 147.2 Z" fill="#4a4a4a"/><rect x="1077" y="127" width="179" height="23" fill="#ffffff" /><rect x="1077" y="127" width="179" height="1" fill="#8b96a7" /><rect x="1077" y="149" width="179" height="1" fill="#8b96a7" /><rect x="1077" y="127" width="1" height="23" fill="#8b96a7" /><rect x="1255" y="127" width="1" height="23" fill="#8b96a7" /><text text-rendering="geometricPrecision" x="1080.73" y="143" font-family="Liberation Sans" font-size="10" font-weight="400" fill="#7a7a7a" stroke="#7a7a7a" stroke-width="0.2" textLength="30.84" lengthAdjust="spacingAndGlyphs" >Search</text><rect x="1011" y="155" width="234" height="1" fill="#c6c8cc" /><rect x="1011" y="155" width="234" height="23" fill="#0074d8" /><path d="M1019.2 169.6 L1026.8 169.6 L1026.8 162.1 Z" fill="#4f5560"/><text text-rendering="geometricPrecision" x="1036.40" y="171" font-family="Liberation Sans" font-size="10" font-weight="700" fill="#ffffff" textLength="46.27" lengthAdjust="spacingAndGlyphs" >Main Info.</text><rect x="1011" y="178" width="234" height="1" fill="#c6c8cc" /><rect x="1011" y="179" width="117" height="33" fill="#3399ff" /><rect x="1011" y="211" width="234" height="1" fill="#c6c8cc" /><rect x="1128" y="179" width="1" height="33" fill="#c6c8cc" /><text text-rendering="geometricPrecision" x="1036.40" y="199" font-family="Liberation Sans" font-size="10" font-weight="400" fill="#fff" stroke="#fff" stroke-width="0.2" textLength="69.63" lengthAdjust="spacingAndGlyphs" >Common Name</text><rect x="1132" y="182" width="110" height="1" fill="#c6c8cc" /><rect x="1132" y="207" width="110" height="1" fill="#c6c8cc" /><rect x="1132" y="182" width="1" height="26" fill="#c6c8cc" /><rect x="1241" y="182" width="1" height="26" fill="#c6c8cc" /><text text-rendering="geometricPrecision" x="1137.80" y="198" font-family="Liberation Sans" font-size="10" font-weight="400" fill="#fff" stroke="#fff" stroke-width="0.2" textLength="65.59" lengthAdjust="spacingAndGlyphs" >Little Bluestem</text><rect x="1011" y="244" width="234" height="1" fill="#c6c8cc" /><rect x="1111" y="212" width="1" height="33" fill="#c6c8cc" /><text text-rendering="geometricPrecision" x="1035.40" y="232" font-family="Liberation Sans" font-size="10" font-weight="400" fill="#fff" stroke="#fff" stroke-width="0.2" textLength="69.16" lengthAdjust="spacingAndGlyphs" >Scientific Name</text><rect x="1115" y="215" width="127" height="1" fill="#c6c8cc" /><rect x="1115" y="240" width="127" height="1" fill="#c6c8cc" /><rect x="1115" y="215" width="1" height="26" fill="#c6c8cc" /><rect x="1241" y="215" width="1" height="26" fill="#c6c8cc" /><text text-rendering="geometricPrecision" x="1121.71" y="231" font-family="Liberation Sans" font-size="10" font-weight="400" fill="#fff" stroke="#fff" stroke-width="0.2" textLength="113.89" lengthAdjust="spacingAndGlyphs" >Schizachyrium Scoparium</text><rect x="1011" y="277" width="234" height="1" fill="#c6c8cc" /><rect x="1128" y="245" width="1" height="33" fill="#c6c8cc" /><text text-rendering="geometricPrecision" x="1036.40" y="265" font-family="Liberation Sans" font-size="10" font-weight="400" fill="#fff" stroke="#fff" stroke-width="0.2" textLength="56.60" lengthAdjust="spacingAndGlyphs" >Abbreviation</text><rect x="1132" y="248" width="110" height="1" fill="#c6c8cc" /><rect x="1132" y="273" width="110" height="1" fill="#c6c8cc" /><rect x="1132" y="248" width="1" height="26" fill="#c6c8cc" /><rect x="1241" y="248" width="1" height="26" fill="#c6c8cc" /><text text-rendering="geometricPrecision" x="1137.89" y="264" font-family="Liberation Sans" font-size="10" font-weight="400" fill="#fff" stroke="#fff" stroke-width="0.2" textLength="11.12" lengthAdjust="spacingAndGlyphs" >LB</text><rect x="1011" y="314" width="234" height="1" fill="#c6c8cc" /><rect x="1092" y="278" width="1" height="37" fill="#c6c8cc" /><text text-rendering="geometricPrecision" x="1036.40" y="300" font-family="Liberation Sans" font-size="10" font-weight="400" fill="#fff" stroke="#fff" stroke-width="0.2" textLength="39.09" lengthAdjust="spacingAndGlyphs" >Category</text><rect x="1098" y="283" width="142" height="1" fill="#c6c8cc" /><rect x="1098" y="308" width="142" height="1" fill="#c6c8cc" /><rect x="1098" y="283" width="1" height="26" fill="#c6c8cc" /><rect x="1239" y="283" width="1" height="26" fill="#c6c8cc" /><text text-rendering="geometricPrecision" x="1105.00" y="300.5" font-family="Liberation Sans" font-size="12" font-weight="400" fill="#fff" stroke="#fff" stroke-width="0.2" textLength="105.63" lengthAdjust="spacingAndGlyphs" >Ornamental Grasses</text><path d="M1225 294 L1232.5 294 L1228.75 298 Z" fill="#ffffff"/><rect x="1011" y="315" width="234" height="23" fill="#0074d8" /><path d="M1019.2 329.6 L1026.8 329.6 L1026.8 322.1 Z" fill="#4f5560"/><text text-rendering="geometricPrecision" x="1036.40" y="331" font-family="Liberation Sans" font-size="10" font-weight="700" fill="#ffffff" textLength="66.53" lengthAdjust="spacingAndGlyphs" >Measurements</text><rect x="1011" y="338" width="234" height="1" fill="#c6c8cc" /><rect x="1011" y="371" width="234" height="1" fill="#c6c8cc" /><rect x="1128" y="339" width="1" height="33" fill="#c6c8cc" /><text text-rendering="geometricPrecision" x="1035.40" y="359" font-family="Liberation Sans" font-size="10" font-weight="400" fill="#fff" stroke="#fff" stroke-width="0.2" textLength="76.91" lengthAdjust="spacingAndGlyphs" >Symbol Diameter</text><rect x="1132" y="342" width="110" height="1" fill="#c6c8cc" /><rect x="1132" y="367" width="110" height="1" fill="#c6c8cc" /><rect x="1132" y="342" width="1" height="26" fill="#c6c8cc" /><rect x="1241" y="342" width="1" height="26" fill="#c6c8cc" /><text text-rendering="geometricPrecision" x="1138.80" y="358" font-family="Liberation Sans" font-size="10" font-weight="400" fill="#fff" stroke="#fff" stroke-width="0.2" >3</text><rect x="1011" y="404" width="234" height="1" fill="#c6c8cc" /><rect x="1128" y="372" width="1" height="33" fill="#c6c8cc" /><text text-rendering="geometricPrecision" x="1035.44" y="392" font-family="Liberation Sans" font-size="10" font-weight="400" fill="#fff" stroke="#fff" stroke-width="0.2" textLength="18.59" lengthAdjust="spacingAndGlyphs" >Size</text><rect x="1132" y="375" width="110" height="1" fill="#c6c8cc" /><rect x="1132" y="400" width="110" height="1" fill="#c6c8cc" /><rect x="1132" y="375" width="1" height="26" fill="#c6c8cc" /><rect x="1241" y="375" width="1" height="26" fill="#c6c8cc" /><text text-rendering="geometricPrecision" x="1137.79" y="391" font-family="Liberation Sans" font-size="10" font-weight="400" fill="#fff" stroke="#fff" stroke-width="0.2" textLength="24.68" lengthAdjust="spacingAndGlyphs" >1 gal.</text><rect x="1011" y="437" width="234" height="1" fill="#c6c8cc" /><rect x="1128" y="405" width="1" height="33" fill="#c6c8cc" /><text text-rendering="geometricPrecision" x="1035.35" y="425" font-family="Liberation Sans" font-size="10" font-weight="400" fill="#fff" stroke="#fff" stroke-width="0.2" textLength="30.45" lengthAdjust="spacingAndGlyphs" >Height</text><rect x="1132" y="408" width="110" height="1" fill="#c6c8cc" /><rect x="1132" y="433" width="110" height="1" fill="#c6c8cc" /><rect x="1132" y="408" width="1" height="26" fill="#c6c8cc" /><rect x="1241" y="408" width="1" height="26" fill="#c6c8cc" /><text text-rendering="geometricPrecision" x="1138.80" y="424" font-family="Liberation Sans" font-size="10" font-weight="400" fill="#fff" stroke="#fff" stroke-width="0.2" >0</text><rect x="1011" y="470" width="234" height="1" fill="#c6c8cc" /><rect x="1128" y="438" width="1" height="33" fill="#c6c8cc" /><text text-rendering="geometricPrecision" x="1035.38" y="458" font-family="Liberation Sans" font-size="10" font-weight="400" fill="#fff" stroke="#fff" stroke-width="0.2" textLength="80.71" lengthAdjust="spacingAndGlyphs" >Minimum Spacing</text><rect x="1132" y="441" width="110" height="1" fill="#c6c8cc" /><rect x="1132" y="466" width="110" height="1" fill="#c6c8cc" /><rect x="1132" y="441" width="1" height="26" fill="#c6c8cc" /><rect x="1241" y="441" width="1" height="26" fill="#c6c8cc" /><text text-rendering="geometricPrecision" x="1138.80" y="457" font-family="Liberation Sans" font-size="10" font-weight="400" fill="#fff" stroke="#fff" stroke-width="0.2" >0</text><rect x="1011" y="503" width="234" height="1" fill="#c6c8cc" /><rect x="1128" y="471" width="1" height="33" fill="#c6c8cc" /><text text-rendering="geometricPrecision" x="1035.37" y="491" font-family="Liberation Sans" font-size="10" font-weight="400" fill="#fff" stroke="#fff" stroke-width="0.2" textLength="50.01" lengthAdjust="spacingAndGlyphs" >Hydrozone</text><rect x="1132" y="474" width="110" height="1" fill="#c6c8cc" /><rect x="1132" y="499" width="110" height="1" fill="#c6c8cc" /><rect x="1132" y="474" width="1" height="26" fill="#c6c8cc" /><rect x="1241" y="474" width="1" height="26" fill="#c6c8cc" /><rect x="1011" y="536" width="234" height="1" fill="#c6c8cc" /><rect x="1128" y="504" width="1" height="33" fill="#c6c8cc" /><text text-rendering="geometricPrecision" x="1035.37" y="524" font-family="Liberation Sans" font-size="10" font-weight="400" fill="#fff" stroke="#fff" stroke-width="0.2" textLength="82.03" lengthAdjust="spacingAndGlyphs" >Irrigation Demand</text><rect x="1132" y="507" width="110" height="1" fill="#c6c8cc" /><rect x="1132" y="532" width="110" height="1" fill="#c6c8cc" /><rect x="1132" y="507" width="1" height="26" fill="#c6c8cc" /><rect x="1241" y="507" width="1" height="26" fill="#c6c8cc" /><text text-rendering="geometricPrecision" x="1138.80" y="523" font-family="Liberation Sans" font-size="10" font-weight="400" fill="#fff" stroke="#fff" stroke-width="0.2" >0</text><rect x="1011" y="569" width="234" height="1" fill="#c6c8cc" /><rect x="1128" y="537" width="1" height="33" fill="#c6c8cc" /><text text-rendering="geometricPrecision" x="1036.40" y="557" font-family="Liberation Sans" font-size="10" font-weight="400" fill="#fff" stroke="#fff" stroke-width="0.2" textLength="76.42" lengthAdjust="spacingAndGlyphs" >Canopy Diameter</text><rect x="1132" y="540" width="110" height="1" fill="#c6c8cc" /><rect x="1132" y="565" width="110" height="1" fill="#c6c8cc" /><rect x="1132" y="540" width="1" height="26" fill="#c6c8cc" /><rect x="1241" y="540" width="1" height="26" fill="#c6c8cc" /><text text-rendering="geometricPrecision" x="1138.80" y="556" font-family="Liberation Sans" font-size="10" font-weight="400" fill="#fff" stroke="#fff" stroke-width="0.2" >2</text><rect x="1011" y="602" width="234" height="1" fill="#c6c8cc" /><rect x="1128" y="570" width="1" height="33" fill="#c6c8cc" /><text text-rendering="geometricPrecision" x="1036.40" y="590" font-family="Liberation Sans" font-size="10" font-weight="400" fill="#fff" stroke="#fff" stroke-width="0.2" textLength="56.13" lengthAdjust="spacingAndGlyphs" >Canopy Area</text><rect x="1132" y="573" width="110" height="1" fill="#c6c8cc" /><rect x="1132" y="598" width="110" height="1" fill="#c6c8cc" /><rect x="1132" y="573" width="1" height="26" fill="#c6c8cc" /><rect x="1241" y="573" width="1" height="26" fill="#c6c8cc" /><text text-rendering="geometricPrecision" x="1138.80" y="589" font-family="Liberation Sans" font-size="10" font-weight="400" fill="#fff" stroke="#fff" stroke-width="0.2" >0</text><rect x="1011" y="603" width="234" height="23" fill="#0074d8" /><path d="M1019.2 617.6 L1026.8 617.6 L1026.8 610.1 Z" fill="#4f5560"/><text text-rendering="geometricPrecision" x="1036.40" y="619" font-family="Liberation Sans" font-size="10" font-weight="700" fill="#ffffff" textLength="64.14" lengthAdjust="spacingAndGlyphs" >Miscellaneous</text><rect x="1011" y="626" width="234" height="1" fill="#c6c8cc" /><rect x="1011" y="659" width="234" height="1" fill="#c6c8cc" /><rect x="1128" y="627" width="1" height="33" fill="#c6c8cc" /><text text-rendering="geometricPrecision" x="1036.40" y="647" font-family="Liberation Sans" font-size="10" font-weight="400" fill="#fff" stroke="#fff" stroke-width="0.2" textLength="71.13" lengthAdjust="spacingAndGlyphs" >Crop Coefficient</text><rect x="1132" y="630" width="110" height="1" fill="#c6c8cc" /><rect x="1132" y="655" width="110" height="1" fill="#c6c8cc" /><rect x="1132" y="630" width="1" height="26" fill="#c6c8cc" /><rect x="1241" y="630" width="1" height="26" fill="#c6c8cc" /><text text-rendering="geometricPrecision" x="1138.80" y="646" font-family="Liberation Sans" font-size="10" font-weight="400" fill="#fff" stroke="#fff" stroke-width="0.2" >0</text><clipPath id="pgc"><rect x="1011" y="124" width="248" height="557"/></clipPath><g clip-path="url(#pgc)"><rect x="1128" y="660" width="1" height="21" fill="#c6c8cc" /><text text-rendering="geometricPrecision" x="1036.40" y="680.5" font-family="Liberation Sans" font-size="10" font-weight="400" fill="#fff" stroke="#fff" stroke-width="0.2" textLength="19.09" lengthAdjust="spacingAndGlyphs" >Cost</text><rect x="1132" y="663" width="110" height="1" fill="#c6c8cc" /><rect x="1132" y="688" width="110" height="1" fill="#c6c8cc" /><rect x="1132" y="663" width="1" height="26" fill="#c6c8cc" /><rect x="1241" y="663" width="1" height="26" fill="#c6c8cc" /><text text-rendering="geometricPrecision" x="1138.80" y="679" font-family="Liberation Sans" font-size="10" font-weight="400" fill="#fff" stroke="#fff" stroke-width="0.2" >0</text></g><rect x="1245" y="155" width="14" height="526" fill="#3b4352" /><path d="M1246.5 166 L1257.5 166 L1252 160 Z" fill="#9c9c9c"/><rect x="1246" y="171" width="12" height="439" fill="#bababa" /><path d="M1246.5 670 L1257.5 670 L1252 676 Z" fill="#9c9c9c"/><rect x="24" y="692" width="80" height="35" fill="#ffffff" /><rect x="26" y="694" width="76" height="31" fill="#0f6dbe" /><text text-rendering="geometricPrecision" x="55.76" y="713" font-family="Liberation Sans" font-size="11" font-weight="700" fill="#ffffff" textLength="35.48" lengthAdjust="spacingAndGlyphs" >Import</text><rect x="110" y="692" width="80" height="35" fill="#ffffff" /><rect x="112" y="694" width="76" height="31" fill="#0f6dbe" /><text text-rendering="geometricPrecision" x="133.53" y="713" font-family="Liberation Sans" font-size="11" font-weight="700" fill="#ffffff" textLength="51.06" lengthAdjust="spacingAndGlyphs" >New Plant</text><rect x="198" y="692" width="90" height="35" fill="#ffffff" /><rect x="200" y="694" width="86" height="31" fill="#0f6dbe" /><text text-rendering="geometricPrecision" x="221.63" y="713" font-family="Liberation Sans" font-size="11" font-weight="700" fill="#ffffff" textLength="61.14" lengthAdjust="spacingAndGlyphs" >Delete Plant</text><rect x="298" y="692" width="100" height="35" fill="#ffffff" /><rect x="300" y="694" width="96" height="31" fill="#0a549e" /><text text-rendering="geometricPrecision" x="322.00" y="713" font-family="Liberation Sans" font-size="11" font-weight="700" fill="#ffffff" textLength="72.76" lengthAdjust="spacingAndGlyphs" >Add To Project</text><rect x="521" y="692" width="89" height="35" fill="#ffffff" /><rect x="523" y="694" width="85" height="31" fill="#78acdb" /><text text-rendering="geometricPrecision" x="544.53" y="713" font-family="Liberation Sans" font-size="11" font-weight="700" fill="#a6c8ea" textLength="61.14" lengthAdjust="spacingAndGlyphs" >Delete Plant</text><rect x="4" y="755" width="80" height="35" fill="#ffffff" /><rect x="6" y="757" width="76" height="31" fill="#0f6dbe" /><text text-rendering="geometricPrecision" x="36.15" y="777" font-family="Liberation Sans" font-size="11" font-weight="700" fill="#ffffff" textLength="36.10" lengthAdjust="spacingAndGlyphs" >Import</text><rect x="90" y="755" width="80" height="35" fill="#ffffff" /><rect x="92" y="757" width="76" height="31" fill="#0f6dbe" /><text text-rendering="geometricPrecision" x="129.00" y="777" font-family="Liberation Sans" font-size="11" font-weight="700" fill="#ffffff" textLength="23.65" lengthAdjust="spacingAndGlyphs" >Save</text><rect x="176" y="755" width="114" height="35" fill="#ffffff" /><rect x="178" y="757" width="110" height="31" fill="#0f6dbe" /><text text-rendering="geometricPrecision" x="202.00" y="777" font-family="Liberation Sans" font-size="11" font-weight="700" fill="#ffffff" textLength="82.47" lengthAdjust="spacingAndGlyphs" >Save As Defaults</text><rect x="296" y="755" width="112" height="35" fill="#ffffff" /><rect x="298" y="757" width="108" height="31" fill="#0f6dbe" /><text text-rendering="geometricPrecision" x="321.06" y="777" font-family="Liberation Sans" font-size="11" font-weight="700" fill="#ffffff" textLength="82.34" lengthAdjust="spacingAndGlyphs" >Restore Defaults</text><rect x="414" y="755" width="80" height="35" fill="#ffffff" /><rect x="416" y="757" width="76" height="31" fill="#0f6dbe" /><text text-rendering="geometricPrecision" x="449.50" y="777" font-family="Liberation Sans" font-size="11" font-weight="700" fill="#ffffff" textLength="30.67" lengthAdjust="spacingAndGlyphs" >About</text><rect x="1114" y="755" width="80" height="35" fill="#ffffff" /><rect x="1116" y="757" width="76" height="31" fill="#0a549e" /><text text-rendering="geometricPrecision" x="1146.00" y="777" font-family="Liberation Sans" font-size="12" font-weight="700" fill="#ffffff" textLength="16.20" lengthAdjust="spacingAndGlyphs" >OK</text><rect x="1197" y="755" width="80" height="35" fill="#ffffff" /><rect x="1199" y="757" width="76" height="31" fill="#0f6dbe" /><text text-rendering="geometricPrecision" x="1220.80" y="777" font-family="Liberation Sans" font-size="12" font-weight="700" fill="#ffffff" textLength="32.80" lengthAdjust="spacingAndGlyphs" >Cancel</text><g fill="#fff">
<path d="M39.8 701.5 H46.5 L51.8 706.5 V716.2 Q51.8 717.4 50.6 717.4 H40.2 Q39 717.4 39 716.2 V702.7 Q39 701.5 40.2 701.5 Z"/>
</g>
<path d="M46.3 703 V707.2 H50.3 Z" fill="#0f6dbe"/>
<path d="M42 710.5 L44 709 L46.3 711.3 L47.6 710 L47.7 715 L42.7 714.9 L44 713.6 Z" fill="#0f6dbe"/>
<rect x="115" y="701.5" width="16" height="16" rx="2.2" fill="#fff"/>
<path d="M123 705 V714 M118.5 709.4 H127.5" stroke="#0f6dbe" stroke-width="2"/>
<g fill="#fff"><rect x="205" y="702.2" width="12.2" height="1.9"/><rect x="209.3" y="701.2" width="3.8" height="1.5" rx="0.6"/>
<path d="M206.1 705 H216.3 V716.2 Q216.3 717.4 215.1 717.4 H207.3 Q206.1 717.4 206.1 716.2 Z"/></g>
<g fill="#a6c8ea"><rect x="528" y="702.2" width="12.2" height="1.9"/><rect x="532.3" y="701.2" width="3.8" height="1.5" rx="0.6"/>
<path d="M529.1 705 H539.3 V716.2 Q539.3 717.4 538.1 717.4 H530.3 Q529.1 717.4 529.1 716.2 Z"/></g>
<path d="M301 709.6 H314" stroke="#fff" stroke-width="4"/>
<path d="M308 703.5 L314.5 709.6 L308 715.7" stroke="#fff" stroke-width="3.2" fill="none" stroke-linecap="square"/>

<path d="M19 769.6 V767 Q19 766.3 19.7 766.3 H30.3 Q31 766.3 31 767 V778 Q31 778.7 30.3 778.7 H19.7 Q19 778.7 19 778 V775.4" stroke="#fff" stroke-width="2" fill="none"/>
<path d="M16.1 772.6 H24" stroke="#fff" stroke-width="1.8"/>
<path d="M23 769 L26.8 772.6 L23 776.2 Z" fill="#fff"/>

<path d="M109.4 764.4 H120.6 L124 767.8 V779 Q124 780.4 122.6 780.4 H109.4 Q108 780.4 108 779 V765.8 Q108 764.4 109.4 764.4 Z" fill="#fff"/>
<rect x="110" y="766.2" width="8.7" height="3.6" fill="#0f6dbe"/>
<circle cx="116" cy="776" r="2.8" fill="#0f6dbe"/>

<path d="M182.4 764.9 H192.5 L195.6 768 V771 L188 778.8 L187.5 779.4 H182.4 Q181 779.4 181 778 V766.3 Q181 764.9 182.4 764.9 Z" fill="#fff"/>
<rect x="183" y="766.6" width="8.3" height="3" fill="#0f6dbe"/>
<circle cx="188.2" cy="775.5" r="2.2" fill="#0f6dbe"/>
<path d="M190 779 L195.5 773.2" stroke="#0f6dbe" stroke-width="3"/>
<path d="M189.8 779.2 L195.8 773" stroke="#fff" stroke-width="1.6"/>

<path d="M305.6 777.6 A5.8 5.8 0 1 0 303.8 772.4" stroke="#fff" stroke-width="1.7" fill="none"/>
<path d="M301.2 772.2 L306.4 772.2 L303.8 775.2 Z" fill="#fff"/>

<circle cx="436.3" cy="772.6" r="7.9" fill="#fff"/>
<circle cx="436.3" cy="769.3" r="1.05" fill="#0f6dbe"/>
<rect x="435.3" y="771.9" width="2" height="4.8" fill="#0f6dbe"/>
<rect x="1232" y="42" width="49" height="24" fill="#3b4352" /><path d="M1232.5 66 V42.5 H1281" stroke="#8f8f8f" stroke-width="1" fill="none"/><path d="M1232.5 65.5 H1281" stroke="#8f8f8f" stroke-width="1"/><text text-rendering="geometricPrecision" x="1238.50" y="59" font-family="Liberation Sans" font-size="12" font-weight="400" fill="#ffffff" stroke="#ffffff" stroke-width="0.2" >Maximize</text><path d="M1232.5 25 L1232.5 51.5 L1238.5 46 L1242.5 54.5 L1246 53 L1242 44.5 L1250 44.5 Z" fill="#fff" stroke="#000" stroke-width="1"/></svg></body></html>
